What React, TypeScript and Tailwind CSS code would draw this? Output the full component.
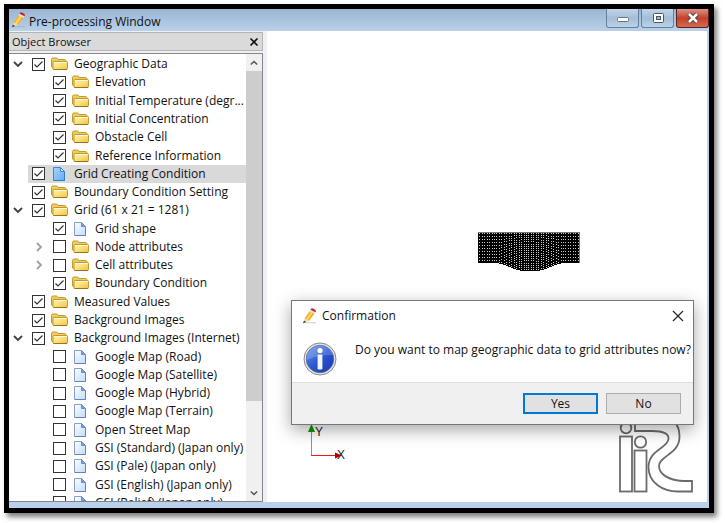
import React from "react";

type Row = { label: string; depth: 0 | 1; icon: "folder" | "file"; checked?: boolean; arrow?: "open" | "closed"; selected?: boolean };

const rows: Row[] = [
  { label: "Geographic Data", depth: 0, icon: "folder", checked: true, arrow: "open" },
  { label: "Elevation", depth: 1, icon: "folder", checked: true },
  { label: "Initial Temperature (degr...", depth: 1, icon: "folder", checked: true },
  { label: "Initial Concentration", depth: 1, icon: "folder", checked: true },
  { label: "Obstacle Cell", depth: 1, icon: "folder", checked: true },
  { label: "Reference Information", depth: 1, icon: "folder", checked: true },
  { label: "Grid Creating Condition", depth: 0, icon: "file", checked: true, selected: true },
  { label: "Boundary Condition Setting", depth: 0, icon: "folder", checked: true },
  { label: "Grid (61 x 21 = 1281)", depth: 0, icon: "folder", checked: true, arrow: "open" },
  { label: "Grid shape", depth: 1, icon: "file", checked: true },
  { label: "Node attributes", depth: 1, icon: "folder", arrow: "closed" },
  { label: "Cell attributes", depth: 1, icon: "folder", arrow: "closed" },
  { label: "Boundary Condition", depth: 1, icon: "folder", checked: true },
  { label: "Measured Values", depth: 0, icon: "folder", checked: true },
  { label: "Background Images", depth: 0, icon: "folder", checked: true },
  { label: "Background Images (Internet)", depth: 0, icon: "folder", checked: true, arrow: "open" },
  { label: "Google Map (Road)", depth: 1, icon: "file" },
  { label: "Google Map (Satellite)", depth: 1, icon: "file" },
  { label: "Google Map (Hybrid)", depth: 1, icon: "file" },
  { label: "Google Map (Terrain)", depth: 1, icon: "file" },
  { label: "Open Street Map", depth: 1, icon: "file" },
  { label: "GSI (Standard) (Japan only)", depth: 1, icon: "file" },
  { label: "GSI (Pale) (Japan only)", depth: 1, icon: "file" },
  { label: "GSI (English) (Japan only)", depth: 1, icon: "file" },
  { label: "GSI (Relief) (Japan only)", depth: 1, icon: "file" },
];

function Gradients() {
  return (
    <svg className="absolute size-0" aria-hidden="true">
      <defs>
        <linearGradient id="folderFront" x1="0" y1="0" x2="1" y2="1">
          <stop offset="0" stopColor="#fff6b0" />
          <stop offset="0.5" stopColor="#fbe07a" />
          <stop offset="1" stopColor="#eec04a" />
        </linearGradient>
        <linearGradient id="page" x1="0" y1="0" x2="1" y2="1">
          <stop offset="0" stopColor="#ffffff" />
          <stop offset="1" stopColor="#bfdcfb" />
        </linearGradient>
        <linearGradient id="pageSelected" x1="0" y1="0" x2="1" y2="1">
          <stop offset="0" stopColor="#a9d2fb" />
          <stop offset="1" stopColor="#62aef0" />
        </linearGradient>
        <linearGradient id="infoBlue" x1="0" y1="0" x2="1" y2="1">
          <stop offset="0" stopColor="#6d9cf0" />
          <stop offset="0.5" stopColor="#2a57cf" />
          <stop offset="1" stopColor="#1a35b0" />
        </linearGradient>
      </defs>
    </svg>
  );
}

function FolderIcon() {
  return (
    <svg viewBox="0 0 17 16" className="h-4 w-[17px] shrink-0" aria-hidden="true">
      <path d="M0.500 11V3.500Q0.500 2 2 2H5.500Q6.500 2 7 3.500H13.500Q15 3.500 15 5V12H2Z" fill="#f0cc5c" stroke="#c29a30" />
      <path d="M3 5.500H15.500Q16.500 5.500 16.500 6.500V12.500Q16.500 13.500 15.500 13.500H3Q2 13.500 2 12.500V6.500Q2 5.500 3 5.500Z" fill="url(#folderFront)" stroke="#c29a30" />
      <path d="M3 6.500H15.500" stroke="#fffbdc" />
      <path d="M2.500 13.500H16" stroke="#9c7416" />
    </svg>
  );
}

function FileIcon({ selected }: { selected?: boolean }) {
  return (
    <svg viewBox="0 0 17 16" className="h-4 w-[17px] shrink-0" aria-hidden="true">
      <path
        d="M2.500 1.500H9.500L13.500 5.500V14.500H2.500Z"
        fill={selected ? "url(#pageSelected)" : "url(#page)"}
        stroke={selected ? "#3f86d0" : "#8a9fd0"}
      />
      <path d="M9.500 1.500V5.500H13.500Z" fill={selected ? "#cfe6fc" : "#7f9edb"} stroke={selected ? "#3f86d0" : "#6d8bcc"} />
      <path d="M13.500 6V14.500H3" fill="none" stroke={selected ? "#3779c2" : "#6680c0"} />
    </svg>
  );
}

function PencilIcon({ className }: { className: string }) {
  return (
    <svg viewBox="0 0 16 16" className={className} aria-hidden="true">
      <path d="M3 14.800H14" stroke="#999" strokeOpacity="0.5" />
      <path d="M8 2.500L13 5L7 13L2.500 10.500Z" fill="#f5b22b" />
      <path d="M9.500 3.200L11 4L5.500 12.300L4 11.400Z" fill="#ffda6b" />
      <path d="M2.500 10.500L7 13L1.500 15Z" fill="#f2d9b0" />
      <path d="M2 12.800L4 14L1 15.300Z" fill="#222" />
      <path d="M7.500 3.200L8.700 1.300L13.700 3.900L12.500 5.700Z" fill="#e5e2e2" />
      <path d="M8.500 1.700Q9.500 -0.300 11.500 0.700L12.800 1.400Q14.600 2.500 13.500 4.300Z" fill="#c4202b" />
    </svg>
  );
}

function Chevron({ kind, className }: { kind: "open" | "closed" | "up"; className: string }) {
  const d = { open: "M1 3L5 7L9 3", closed: "M3 1L7 5L3 9", up: "M1 7L5 3L9 7" }[kind];
  return (
    <svg viewBox="0 0 10 10" className={className} fill="none" stroke="currentColor" strokeWidth="1.800" aria-hidden="true">
      <path d={d} />
    </svg>
  );
}

function TreeRow({ row }: { row: Row }) {
  const id = row.label.toLowerCase().replace(/[^a-z0-9]+/g, "-");
  return (
    <li className={`flex min-h-0 items-center ${row.depth === 1 ? "pl-[25px]" : "pl-1"}`}>
      <span className="flex w-[19px] shrink-0 items-center">
        {row.arrow && (
          <button aria-label={`Toggle ${row.label}`} className={row.arrow === "open" ? "text-[#404040]" : "text-[#a0a0a0]"}>
            <Chevron kind={row.arrow} className="size-[10px]" />
          </button>
        )}
      </span>
      <span className={`flex h-full min-w-0 flex-1 items-center ${row.selected ? "-ml-1 bg-[#d9d9d9] pl-1" : ""}`}>
        <span className="grid shrink-0">
          <input
            id={id}
            type="checkbox"
            defaultChecked={row.checked}
            className="peer col-start-1 row-start-1 size-[13px] appearance-none border border-[#333] bg-white"
          />
          <svg
            viewBox="0 0 13 13"
            className="pointer-events-none invisible col-start-1 row-start-1 size-[13px] peer-checked:visible"
            fill="none"
            stroke="#333"
            strokeWidth="1.200"
            aria-hidden="true"
          >
            <path d="M2.500 6.500L5 9L10.500 3.500" />
          </svg>
        </span>
        <label htmlFor={id} className="ml-[6px] flex min-w-0 items-center gap-[6px] whitespace-nowrap">
          {row.icon === "folder" ? <FolderIcon /> : <FileIcon selected={row.selected} />}
          {row.label}
        </label>
      </span>
    </li>
  );
}

const GRID_W = 102;
const COLS = 60;
const LINES = 20;

function depthAt(x: number) {
  if (x < 16 || x > 87) return 30;
  const t = Math.min(1, x < 51 ? (x - 16) / 30 : (87 - x) / 30);
  return 30 + 8 * (0.5 - 0.5 * Math.cos(Math.PI * t));
}

function meshOutline() {
  let d = "M0 0";
  for (let x = 0; x < GRID_W; x++) d += `V${Math.round(depthAt(x)) + 1}H${x + 1}`;
  return d + "V0Z";
}

// A mesh so dense that only the pixels between two grid lines stay light.
function meshGaps() {
  const xs = new Set(Array.from({ length: COLS + 1 }, (_, i) => Math.round((i * (GRID_W - 1)) / COLS)));
  let d = "";
  for (let x = 0; x < GRID_W; x++) {
    if (xs.has(x)) continue;
    const h = depthAt(x);
    const ys = new Set(Array.from({ length: LINES + 1 }, (_, j) => Math.round((j * h) / LINES)));
    for (let y = 1; y < h; y++) if (!ys.has(y)) d += `M${x} ${y}h1v1h-1z`;
  }
  return d;
}

function MeshDrawing() {
  return (
    <svg viewBox="0 0 102 39" className="h-[39px] w-[102px]" shapeRendering="crispEdges" role="img" aria-label="Grid shape">
      <path d={meshOutline()} fill="#000" />
      <path d={meshGaps()} fill="#c8c8c8" />
      <path d="M0 0H102V1H0ZM101 0H102V31H101Z" fill="#777" />
    </svg>
  );
}

function Logo() {
  return (
    <svg viewBox="0 0 76 80" className="h-20 w-[76px]" fill="none" stroke="#6b6b6b" strokeWidth="1.800" aria-hidden="true">
      <rect x="2" y="23.500" width="12" height="55" />
      <circle cx="8" cy="15" r="5.300" />
      <rect x="16.500" y="37.500" width="12" height="41" />
      <circle cx="22.500" cy="29" r="5.700" />
      <path d="M17 4V18H34C46 18 51 21 50.500 26C50 35 30.500 37 30.500 54C30.500 70 45 78.500 60 78.500H74V68H65C50 67 41 61 41 53C41 43 61.500 41 61.500 24C61.500 10 54 4 42 4Z" />
    </svg>
  );
}

function InfoIcon() {
  return (
    <svg viewBox="0 0 34 34" className="size-[34px] shrink-0" role="img" aria-label="Information">
      <circle cx="17" cy="17" r="16" fill="#e9e9e9" stroke="#858585" />
      <circle cx="17" cy="17" r="13.800" fill="url(#infoBlue)" stroke="#5a6a9c" strokeWidth="0.800" />
      <path d="M3.500 18C4 9 9 3.500 17 3.500C24 3.500 29 8 30 13C20 13 10 15 3.500 18Z" fill="#fff" fillOpacity="0.180" />
      <circle cx="17" cy="8.500" r="2.600" fill="#fff" />
      <rect x="14.600" y="12.500" width="4.800" height="15" rx="1" fill="#f4f4f4" />
    </svg>
  );
}

function AxisMarker() {
  return (
    <svg viewBox="0 0 42 44" className="h-11 w-[42px]" aria-hidden="true">
      <path d="M6.500 36V8" stroke="#1fe01f" />
      <path d="M3 12L6.500 4L10 12Z" fill="#0a9a0a" />
      <path d="M6 35.500H31" stroke="#f01818" />
      <path d="M30 32.500L37 35.500L30 38.500Z" fill="#b40000" />
      <text x="10" y="16" fontSize="12" fill="#222" fontFamily="Liberation Sans, sans-serif">Y</text>
      <text x="32" y="39" fontSize="12" fill="#222" fontFamily="Liberation Sans, sans-serif">X</text>
    </svg>
  );
}

const captionButton = "flex h-[19px] items-center justify-center rounded-b-[3px] border border-t-0";

export default function App() {
  return (
    <div className="flex h-screen bg-white pt-1 pr-[11px] pb-[10px] pl-1 font-['Open_Sans','Noto_Sans',sans-serif] text-[12px] leading-4 text-[#111]">
      <Gradients />
      <div className="flex min-w-0 flex-1 flex-col border-[5px] border-black bg-[#b9d1ea] shadow-[3px_4px_5px_rgba(0,0,0,0.5)]">
        <header className="flex h-[22px] shrink-0 items-start bg-linear-to-b from-[#9ab5d3] to-[#b9d1ea] pl-[2px]">
          <PencilIcon className="mt-[3px] size-4" />
          <h1 className="mt-[5px] ml-[2px] flex-1">Pre-processing Window</h1>
          <div className="flex gap-[2px]">
            <button aria-label="Minimize" className={`${captionButton} w-[33px] border-[#66809d] bg-linear-to-b from-[#c2d5e9] via-[#a3bdd8] to-[#bcd2ea]`}>
              <svg viewBox="0 0 12 8" className="mt-1 h-2 w-3"><rect x="0.500" y="1.500" width="11" height="4" rx="1" fill="#fff" stroke="#6c7480" /></svg>
            </button>
            <button aria-label="Maximize" className={`${captionButton} w-[33px] border-[#66809d] bg-linear-to-b from-[#c2d5e9] via-[#a3bdd8] to-[#bcd2ea]`}>
              <svg viewBox="0 0 12 10" className="h-[10px] w-3"><rect x="1.500" y="0.500" width="10" height="9" rx="1" fill="#fff" stroke="#4c5460" /><rect x="4.500" y="3.500" width="4" height="3" fill="#9db8d4" stroke="#4c5460" /></svg>
            </button>
            <button aria-label="Close" className={`${captionButton} w-[33px] border-[#5e2222] bg-linear-to-b from-[#dd9183] via-[#c1402c] to-[#d4694f]`}>
              <svg viewBox="0 0 14 12" className="h-3 w-[14px]"><path d="M3 2L11 10M11 2L3 10" stroke="#4b3b42" strokeWidth="4.500" /><path d="M3 2L11 10M11 2L3 10" stroke="#fff" strokeWidth="2.500" /></svg>
            </button>
          </div>
        </header>

        <div className="mr-[2px] mb-[6px] flex min-h-0 flex-1 bg-[#f0f0f0]">
          <aside className="flex w-[254px] shrink-0 flex-col">
            <div className="mt-px flex h-[19px] shrink-0 items-center justify-between border border-l-0 border-[#b4b4b4] bg-[#dadada] pr-[3px] pl-[3px] text-[11px]">
              <h2>Object Browser</h2>
              <button aria-label="Close Object Browser">
                <svg viewBox="0 0 10 10" className="size-[10px]" stroke="#111" strokeWidth="1.600"><path d="M1.500 1.500L8.500 8.500M8.500 1.500L1.500 8.500" /></svg>
              </button>
            </div>
            <div className="mt-[2px] flex min-h-0 flex-1 overflow-hidden border border-l-0 border-[#82878f] bg-white">
              <ul className="mt-px grid h-[457px] min-w-0 flex-1 auto-rows-fr">
                {rows.map((row) => (
                  <TreeRow key={row.label} row={row} />
                ))}
              </ul>
              <div className="flex w-4 shrink-0 flex-col items-center bg-[#f0f0f0] text-[#555]">
                <button aria-label="Scroll up" className="flex h-[17px] items-center"><Chevron kind="up" className="size-2" /></button>
                <div className="w-full flex-[330] bg-[#cdcdcd]" />
                <div className="flex-[83]" />
                <button aria-label="Scroll down" className="flex h-[17px] items-center"><Chevron kind="open" className="size-2" /></button>
              </div>
            </div>
          </aside>

          <main className="relative ml-1 min-w-0 flex-1 bg-white">
            <div className="absolute top-[201px] right-[127px]"><MeshDrawing /></div>
            <div className="absolute bottom-[38px] left-[38px]"><AxisMarker /></div>
            <div className="absolute right-[13px] bottom-[9px]"><Logo /></div>

            <section
              role="dialog"
              aria-labelledby="dialog-title"
              className="absolute right-[13px] bottom-[77px] w-[403px] border border-[#777] bg-white shadow-[0_5px_16px_rgba(0,0,0,0.35)]"
            >
              <div className="flex h-[30px] items-center pr-[9px] pl-[10px]">
                <PencilIcon className="size-4" />
                <h2 id="dialog-title" className="ml-1 flex-1">Confirmation</h2>
                <button aria-label="Close dialog">
                  <svg viewBox="0 0 12 12" className="size-3" stroke="#222" strokeWidth="1.200"><path d="M1 1L11 11M11 1L1 11" /></svg>
                </button>
              </div>
              <div className="flex h-[51px] items-start gap-[18px] pl-[11px]">
                <div className="mt-[11px]"><InfoIcon /></div>
                <p className="mt-[11px] whitespace-nowrap">Do you want to map geographic data to grid attributes now?</p>
              </div>
              <div className="flex h-[42px] items-center justify-end gap-2 border-t border-[#dfdfdf] bg-[#f0f0f0] pr-3">
                <button className="h-[21px] w-[75px] border-2 border-[#0078d7] bg-[#e1e1e1]">Yes</button>
                <button className="h-[21px] w-[75px] border border-[#adadad] bg-[#e1e1e1]">No</button>
              </div>
            </section>
          </main>
        </div>
      </div>
    </div>
  );
}
